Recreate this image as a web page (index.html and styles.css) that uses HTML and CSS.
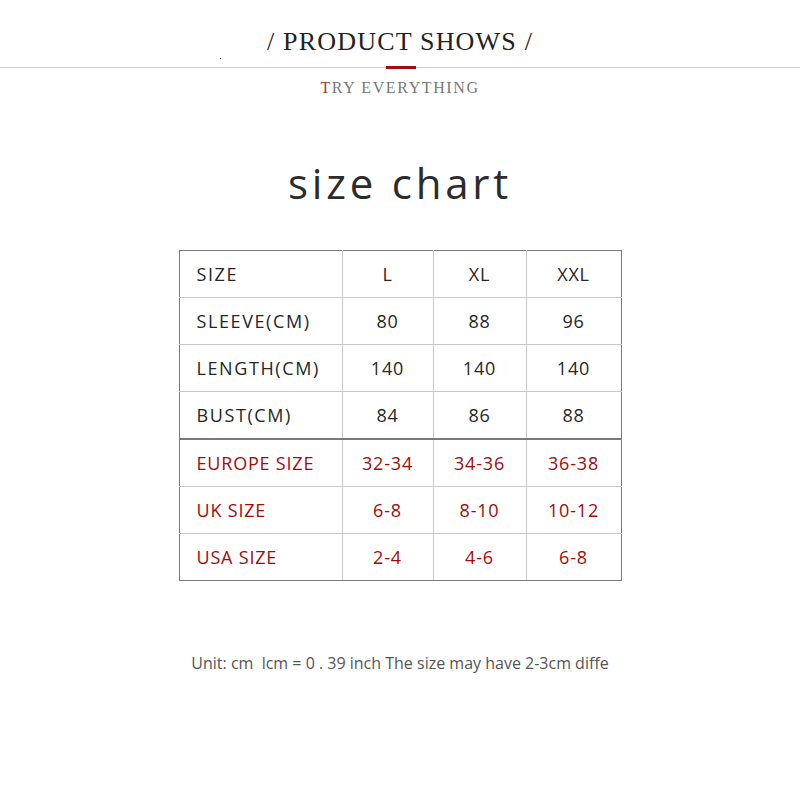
FILE: index.html
```html
<!DOCTYPE html>
<html>
<head>
<meta charset="utf-8">
<link rel="stylesheet" href="styles.css">
</head>
<body>
<div class="page">
  <header class="top">
    <div class="title-row">
      <span class="dot"></span>
      <h1 class="title">/ PRODUCT SHOWS /</h1>
    </div>
    <div class="rule"><span class="accent"></span></div>
    <p class="subtitle"><span class="first">T</span>RY EVERYTHING</p>
  </header>

  <h2 class="chart-title">size chart</h2>

  <table class="chart">
    <tbody class="dark">
      <tr><td class="label">SIZE</td><td>L</td><td>XL</td><td>XXL</td></tr>
      <tr><td class="label">SLEEVE(CM)</td><td>80</td><td>88</td><td>96</td></tr>
      <tr><td class="label">LENGTH(CM)</td><td>140</td><td>140</td><td>140</td></tr>
      <tr><td class="label">BUST(CM)</td><td>84</td><td>86</td><td>88</td></tr>
    </tbody>
    <tbody class="red">
      <tr><td class="label">EUROPE SIZE</td><td>32-34</td><td>34-36</td><td>36-38</td></tr>
      <tr><td class="label">UK SIZE</td><td>6-8</td><td>8-10</td><td>10-12</td></tr>
      <tr><td class="label">USA SIZE</td><td>2-4</td><td>4-6</td><td>6-8</td></tr>
    </tbody>
  </table>

  <p class="note">Unit: cm&nbsp; lcm = 0 . 39 inch The size may have 2-3cm diffe</p>
</div>
</body>
</html>
```

FILE: styles.css
```css
html, body {
  margin: 0;
  padding: 0;
  background: #fff;
}

.page {
  width: 800px;
  height: 800px;
  display: flex;
  flex-direction: column;
  align-items: center;
}

.top {
  width: 100%;
  display: flex;
  flex-direction: column;
  align-items: center;
}

.title-row {
  position: relative;
  width: 100%;
  height: 67px;
  display: flex;
  justify-content: center;
}

.dot {
  position: absolute;
  left: 220px;
  top: 58px;
  width: 1px;
  height: 1px;
  background: #333;
}

.title {
  margin: 0;
  padding-top: 27px;
  font-family: "Liberation Serif", serif;
  font-weight: normal;
  font-size: 26px;
  line-height: 30px;
  letter-spacing: 1.2px;
  color: #222;
}

.rule {
  width: 100%;
  height: 1px;
  background: #cfcfcf;
  position: relative;
}

.accent {
  position: absolute;
  left: 386px;
  top: -1px;
  width: 30px;
  height: 3px;
  background: #9e0f0f;
}

.subtitle {
  margin: 10px 0 0;
  font-family: "Liberation Serif", serif;
  font-size: 16px;
  line-height: 20px;
  letter-spacing: 1.6px;
  color: #777;
}

.subtitle .first {
  color: #a23a3a;
}

.chart-title {
  margin: 60px 0 0;
  font-family: "Open Sans", sans-serif;
  font-weight: normal;
  font-size: 42px;
  line-height: 50px;
  letter-spacing: 3.8px;
  color: #2b2b2b;
}

.chart {
  margin-top: 42px;
  border-collapse: collapse;
  border: 1px solid #7a7a7a;
  font-family: "Open Sans", sans-serif;
  font-size: 18px;
  letter-spacing: 0.8px;
}

.chart td {
  height: 46px;
  padding: 0;
  border: 1px solid #c8c8c8;
  text-align: center;
  vertical-align: middle;
}

.chart td:nth-child(1) { width: 145px; padding-left: 17px; text-align: left; }
.chart td:nth-child(2) { width: 90px; }
.chart td:nth-child(3) { width: 92px; }
.chart td:nth-child(4) { width: 94px; }

.chart tr:first-child td { border-top-color: #7a7a7a; }
.chart td:first-child { border-left-color: #7a7a7a; }
.chart td:last-child { border-right-color: #7a7a7a; }
.chart tbody:last-child tr:last-child td { border-bottom-color: #7a7a7a; }

.dark td {
  color: #262626;
}

.dark .label {
  letter-spacing: 1.6px;
}

.red td {
  color: #a00c0c;
}

.red tr:first-child td {
  border-top: 2px solid #7a7a7a;
}

.note {
  margin: 71px 0 0;
  font-family: "Open Sans", sans-serif;
  font-size: 16px;
  color: #555;
}
```
